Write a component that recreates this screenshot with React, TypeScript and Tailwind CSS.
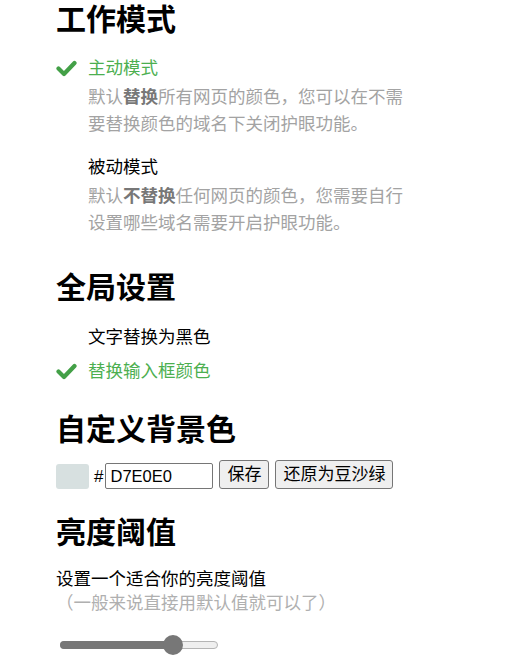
import React from 'react';

const Check: React.FC = () => (
  <svg width="21" height="17" viewBox="0 0 21 17" className="shrink-0">
    <path d="M2.5 8.5 L8 14 L18.5 3" fill="none" stroke="#43a047" strokeWidth="4.2" strokeLinecap="round" strokeLinejoin="round" />
  </svg>
);

const Item: React.FC<{ checked?: boolean; className?: string; children: React.ReactNode }> = ({ checked, className, children }) => (
  <div className={`flex items-center leading-[27px] h-[27px] ${className ?? ''}`}>
    <div className="w-[32px] flex items-center">{checked && <Check />}</div>
    <span className={checked ? 'text-[#4caf50]' : 'text-black'}>{children}</span>
  </div>
);

const App: React.FC = () => {
  const value = 72; // brightness threshold, percent of track

  return (
    <div className="min-h-screen bg-white pl-[56px] pt-[2px] text-[17.5px] text-black font-['Liberation_Sans','Noto_Sans_CJK_SC',sans-serif]">
      <h1 className="text-[30px] font-bold leading-[36px]">工作模式</h1>

      <Item checked className="mt-[16.5px]">主动模式</Item>
      <p className="mt-[2px] ml-[32px] w-[322px] leading-[27px] text-[#a3a3a3]">
        默认<b className="font-bold text-[#777]">替换</b>所有网页的颜色，您可以在不需要替换颜色的域名下关闭护眼功能。
      </p>

      <Item className="mt-[16px]">被动模式</Item>
      <p className="mt-[2px] ml-[32px] w-[322px] leading-[27px] text-[#a3a3a3]">
        默认<b className="font-bold text-[#777]">不替换</b>任何网页的颜色，您需要自行设置哪些域名需要开启护眼功能。
      </p>

      <h1 className="mt-[33.5px] text-[30px] font-bold leading-[36px]">全局设置</h1>
      <Item className="mt-[17.5px]">文字替换为黑色</Item>
      <Item checked className="mt-[7.5px]">替换输入框颜色</Item>

      <h1 className="mt-[27px] text-[30px] font-bold leading-[36px]">自定义背景色</h1>
      <div className="mt-[12px] flex items-end h-[29px]">
        <div className="w-[33px] h-[25px] rounded-[3px] bg-[#d7e0e0]" />
        <span className="ml-[5px] mr-[2px] leading-[25px] text-[17px]">#</span>
        <input
          readOnly
          value="D7E0E0"
          className="w-[108px] h-[26px] border border-[#767676] rounded-[2px] px-[4px] text-[16.5px] text-black outline-none"
        />
        <button className="ml-[6px] h-[29px] px-[7px] border border-[#767676] rounded-[3px] bg-[#efefef] text-[17px] leading-[27px]">保存</button>
        <button className="ml-[6px] h-[29px] px-[7px] border border-[#767676] rounded-[3px] bg-[#efefef] text-[17px] leading-[27px]">还原为豆沙绿</button>
      </div>

      <h1 className="mt-[26px] text-[30px] font-bold leading-[36px]">亮度阈值</h1>
      <p className="mt-[17px] leading-[23.5px]">
        设置一个适合你的亮度阈值
        <br />
        <span className="text-[#b0b0b0]">（一般来说直接用默认值就可以了）</span>
      </p>

      <div className="mt-[20px] ml-[4px] w-[158px] h-[20px] flex items-center">
        <div className="relative w-full h-[8px] rounded-full bg-[#efefef] border border-[#b5b5b5]">
          <div className="absolute -left-px -top-px h-[8px] rounded-full bg-[#777]" style={{ width: `${value}%` }} />
          <div
            className="absolute top-1/2 w-[20px] h-[20px] -translate-x-1/2 -translate-y-1/2 rounded-full bg-[#777]"
            style={{ left: `${value}%` }}
          />
        </div>
      </div>
    </div>
  );
};

export default App;
